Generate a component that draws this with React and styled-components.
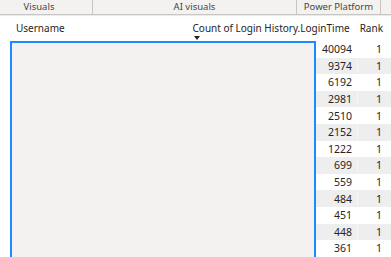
import React from 'react';
import styled, { createGlobalStyle } from 'styled-components';

const GlobalStyle = createGlobalStyle`
  html, body {
    margin: 0;
    padding: 0;
    background: #ffffff;
    overflow: hidden;
  }
  body {
    font-family: "Noto Sans", "Open Sans", sans-serif;
    color: #252423;
  }
`;

const Page = styled.div`
  width: 391px;
  height: 257px;
  display: flex;
  flex-direction: column;
  overflow: hidden;
`;

// ribbon strip with the pane group labels
const Ribbon = styled.div`
  height: 14px;
  display: grid;
  grid-template-columns: 93px 204px 84px 10px;
  background: #f3f2f1;
  border-bottom: 1px solid #c8c6c4;
  box-shadow: 0 1px 1px rgba(0, 0, 0, 0.08);
  flex-shrink: 0;
`;

const RibbonGroup = styled.div`
  display: flex;
  align-items: center;
  justify-content: center;
  border-right: ${(p) => (p.$last ? 'none' : '1px solid #c8c6c4')};
  padding-right: ${(p) => p.$shift || 0}px;
  font-size: 9.5px;
  line-height: 14px;
  color: #484644;
  white-space: nowrap;
  overflow: hidden;
`;

const HeaderRow = styled.div`
  height: 26px;
  display: flex;
  align-items: center;
  padding: 0 8px 0 16px;
  font-size: 10px;
  color: #252423;
  white-space: nowrap;
  flex-shrink: 0;
`;

const UsernameHead = styled.div`
  flex: 1;
`;

const CountHead = styled.div`
  position: relative;
  margin-right: 10px;
`;

const SortArrow = styled.span`
  position: absolute;
  left: 1px;
  top: 15px;
  width: 0;
  height: 0;
  border-left: 3.5px solid transparent;
  border-right: 3.5px solid transparent;
  border-top: 4px solid #252423;
`;

const Body = styled.div`
  flex: 1;
  display: flex;
  min-height: 0;
  padding-left: 10px;
`;

const SelectionBox = styled.div`
  width: 306px;
  box-sizing: border-box;
  border: 2px solid #1a8cff;
  border-bottom: none;
  background: #f3f2f1;
  flex-shrink: 0;
`;

const Values = styled.div`
  flex: 1;
  display: flex;
  flex-direction: column;
`;

const Row = styled.div`
  height: 16.6px;
  display: grid;
  grid-template-columns: 41px 34px;
  align-items: center;
  background: ${(p) => (p.$striped ? '#eeeeee' : '#ffffff')};
  font-size: 10.5px;
  color: #252423;
  flex-shrink: 0;
`;

const Cell = styled.div`
  text-align: right;
  padding-right: ${(p) => p.$pad}px;
  border-left: ${(p) => (p.$divider ? '1px solid rgba(255,255,255,0.5)' : 'none')};
`;

const rows = [40094, 9374, 6192, 2981, 2510, 2152, 1222, 699, 559, 484, 451, 448, 361, 319];

export default function App() {
  return (
    <Page>
      <GlobalStyle />
      <Ribbon>
        <RibbonGroup $shift={14}>Visuals</RibbonGroup>
        <RibbonGroup>AI visuals</RibbonGroup>
        <RibbonGroup>Power Platform</RibbonGroup>
        <RibbonGroup $last />
      </Ribbon>
      <HeaderRow>
        <UsernameHead>Username</UsernameHead>
        <CountHead>
          Count of Login History.LoginTime
          <SortArrow />
        </CountHead>
        <div>Rank</div>
      </HeaderRow>
      <Body>
        <SelectionBox />
        <Values>
          {rows.map((n, i) => (
            <Row key={i} $striped={i % 2 === 1}>
              <Cell $pad={5}>{n}</Cell>
              <Cell $pad={9} $divider>1</Cell>
            </Row>
          ))}
        </Values>
      </Body>
    </Page>
  );
}
